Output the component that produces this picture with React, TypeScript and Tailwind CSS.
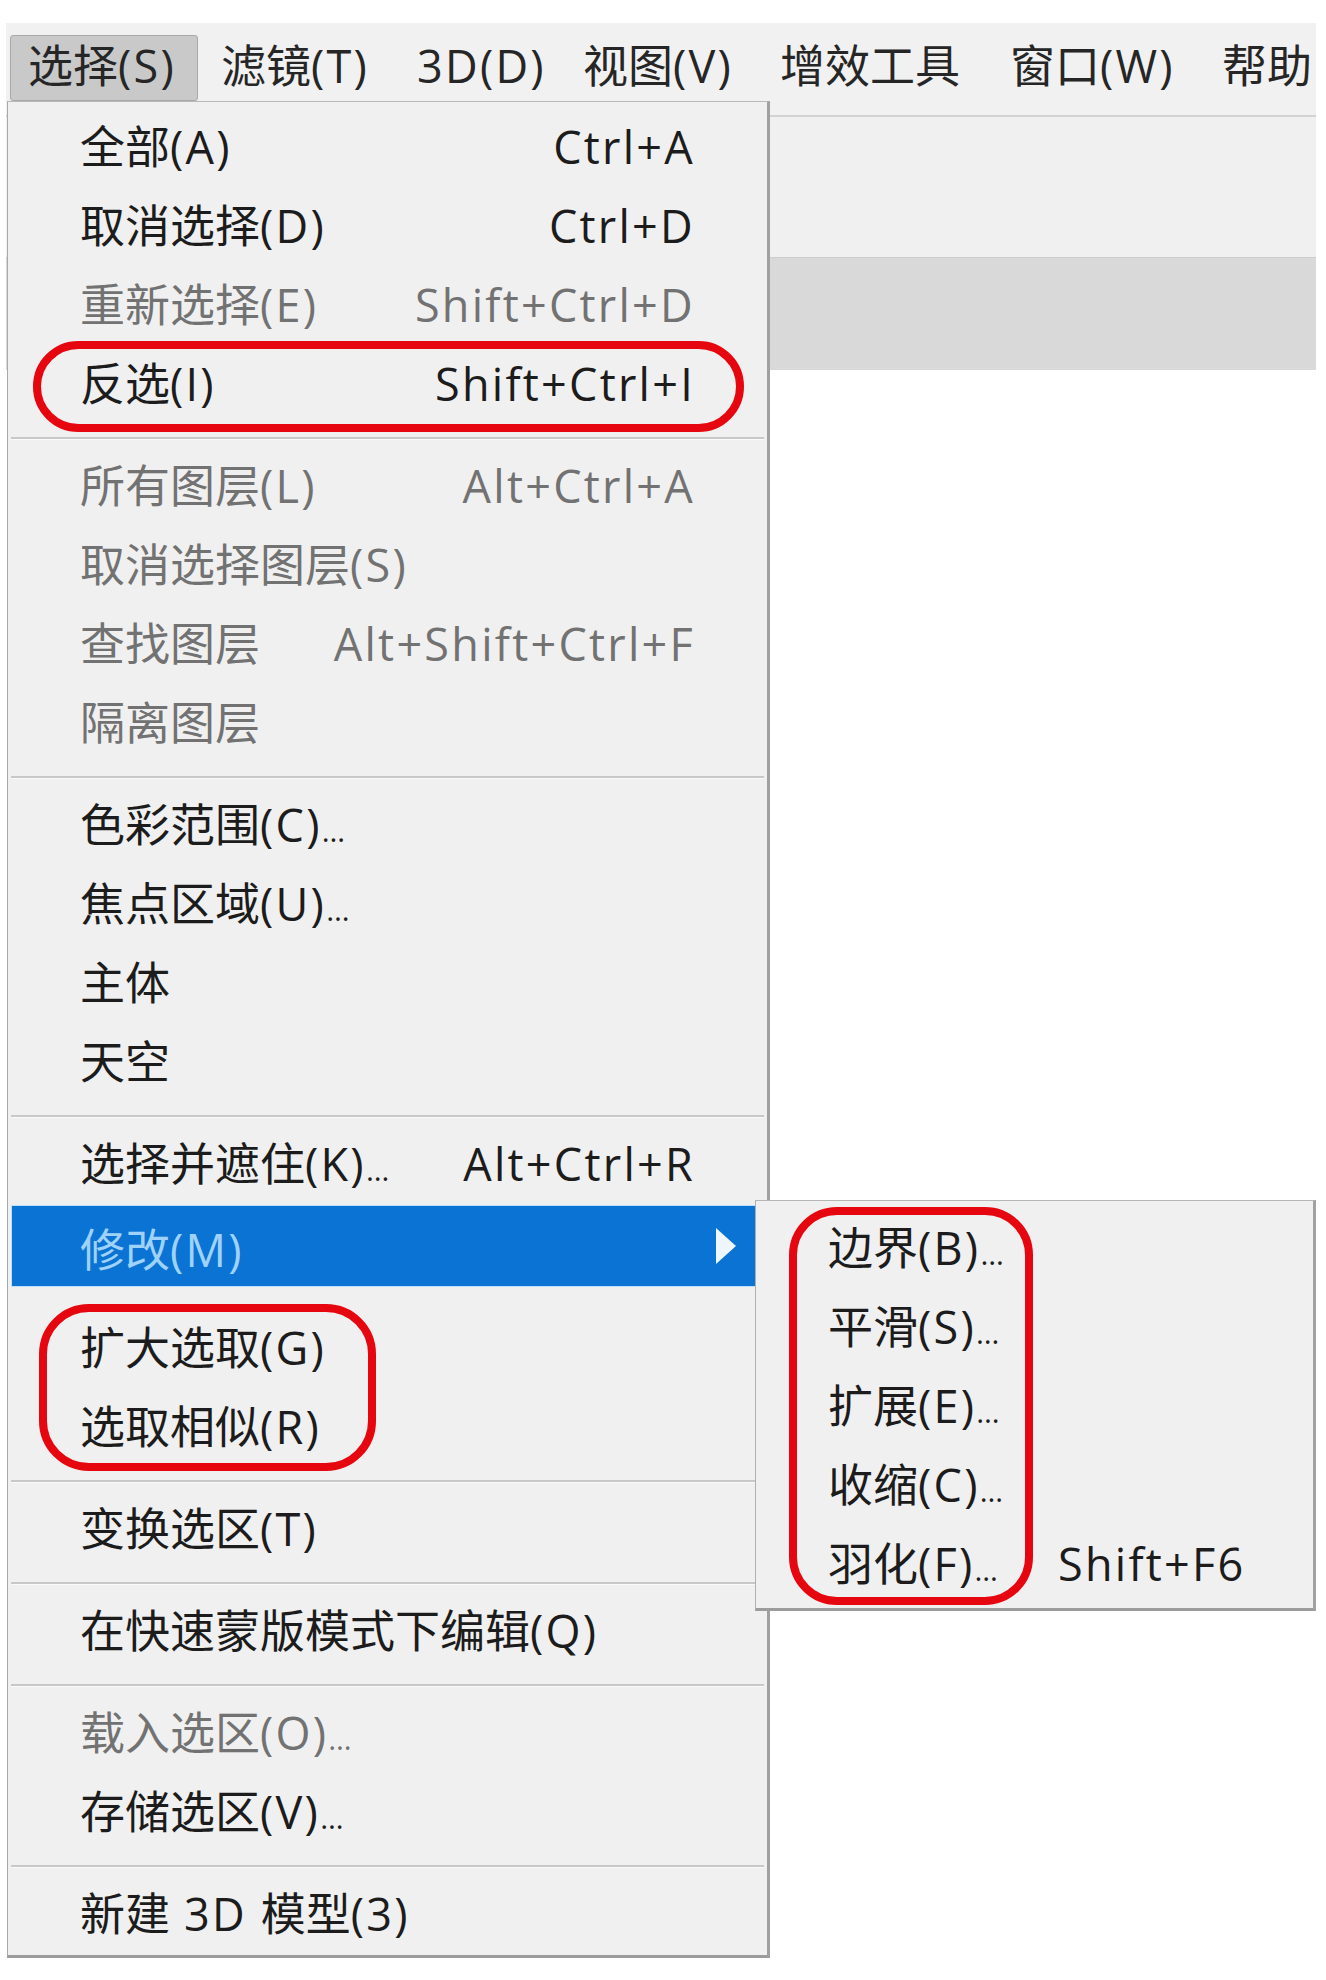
import React from "react";

const CJK = /([\u2E80-\u9FFF\u3000-\u303F\uFF00-\uFFEF]+)/;

function Txt({ s }: { s: string }) {
  const parts = s.split(CJK).filter((p) => p.length > 0);
  return (
    <>
      {parts.map((p, i) => {
        if (CJK.test(p)) return <span key={i}>{p}</span>;
        if (p.includes("…")) {
          const [a, b] = p.split("…");
          return (
            <span key={i} className="tracking-[0.05em]">
              {a}
              <span className="text-[30px] tracking-[-0.08em]">…</span>
              {b}
            </span>
          );
        }
        return (
          <span key={i} className="tracking-[0.05em] whitespace-pre">
            {p}
          </span>
        );
      })}
    </>
  );
}

type Entry =
  | { k: "item"; label: string; sc?: string; dis?: boolean }
  | { k: "sep" }
  | { k: "hl"; label: string }
  | { k: "gap" };

const MENU: Entry[] = [
  { k: "item", label: "全部(A)", sc: "Ctrl+A" },
  { k: "item", label: "取消选择(D)", sc: "Ctrl+D" },
  { k: "item", label: "重新选择(E)", sc: "Shift+Ctrl+D", dis: true },
  { k: "item", label: "反选(I)", sc: "Shift+Ctrl+I" },
  { k: "sep" },
  { k: "item", label: "所有图层(L)", sc: "Alt+Ctrl+A", dis: true },
  { k: "item", label: "取消选择图层(S)", dis: true },
  { k: "item", label: "查找图层", sc: "Alt+Shift+Ctrl+F", dis: true },
  { k: "item", label: "隔离图层", dis: true },
  { k: "sep" },
  { k: "item", label: "色彩范围(C)…" },
  { k: "item", label: "焦点区域(U)…" },
  { k: "item", label: "主体" },
  { k: "item", label: "天空" },
  { k: "sep" },
  { k: "item", label: "选择并遮住(K)…", sc: "Alt+Ctrl+R" },
  { k: "hl", label: "修改(M)" },
  { k: "gap" },
  { k: "item", label: "扩大选取(G)" },
  { k: "item", label: "选取相似(R)" },
  { k: "sep" },
  { k: "item", label: "变换选区(T)" },
  { k: "sep" },
  { k: "item", label: "在快速蒙版模式下编辑(Q)" },
  { k: "sep" },
  { k: "item", label: "载入选区(O)…", dis: true },
  { k: "item", label: "存储选区(V)…" },
  { k: "sep" },
  { k: "item", label: "新建 3D 模型(3)" },
];

const SUB = [
  { label: "边界(B)…" },
  { label: "平滑(S)…" },
  { label: "扩展(E)…" },
  { label: "收缩(C)…" },
  { label: "羽化(F)…", sc: "Shift+F6" },
];

function MenuEntry({ e }: { e: Entry }) {
  if (e.k === "sep")
    return (
      <div className="h-[23px] pt-[12px] px-[3px]">
        <div className="h-[2px] bg-[#c8c8c8]" />
        <div className="h-[1px] bg-[#fafafa]" />
      </div>
    );
  if (e.k === "gap") return <div className="h-[23px]" />;
  if (e.k === "hl")
    return (
      <div className="mx-[3px] h-[82px] bg-[#0b73d3] border border-[#bfe0fa] flex items-center justify-between pl-[68px] pr-[26px] text-[#9ed2fa]">
        <span className="pt-[6px]">
          <Txt s={e.label} />
        </span>
        <svg width="22" height="38" viewBox="0 0 22 38">
          <path d="M1 1 L21 19 L1 37 Z" fill="#eef7ff" />
        </svg>
      </div>
    );
  return (
    <div
      className={
        "h-[79px] flex items-center justify-between px-[72px] pb-[5px] " +
        (e.dis ? "text-[#727272]" : "text-[#1c1c1c]")
      }
    >
      <span>
        <Txt s={e.label} />
      </span>
      {e.sc ? (
        <span>
          <Txt s={e.sc} />
        </span>
      ) : null}
    </div>
  );
}

export default function App() {
  const bar = [
    { t: "滤镜(T)", w: "w-[196px] ml-[23px]" },
    { t: "3D(D)", w: "w-[166px]" },
    { t: "视图(V)", w: "w-[197px]" },
    { t: "增效工具", w: "w-[230px]" },
    { t: "窗口(W)", w: "w-[212px]" },
    { t: "帮助", w: "w-[94px]" },
  ];
  return (
    <div className="relative w-[1326px] h-[1980px] bg-white overflow-hidden font-['Open_Sans','Noto_Sans_CJK_SC',sans-serif] text-[45px] leading-none">
      {/* window chrome */}
      <div className="pt-[23px] pl-[6px] w-[1316px]">
        <div className="h-[94px] bg-[#f1f1f1] border-b-[2px] border-[#d2d2d2] flex items-start pl-[4px] text-[#262626] overflow-hidden">
          <div className="w-[188px] h-[66px] mt-[12px] bg-[#c9c9c9] border border-[#a9a9a9] rounded-[3px] pl-[17px] pb-[6px] flex items-center">
            <span>
              <Txt s="选择(S)" />
            </span>
          </div>
          {bar.map((b) => (
            <div key={b.t} className={"h-[66px] mt-[12px] pb-[6px] flex items-center shrink-0 " + b.w}>
              <span className="whitespace-nowrap">
                <Txt s={b.t} />
              </span>
            </div>
          ))}
        </div>
        <div className="h-[140px] bg-[#f0f0f0]" />
        <div className="h-[113px] bg-[#d9d9d9] border-t border-[#cdcdcd]" />
      </div>

      {/* main dropdown menu */}
      <div className="absolute left-[7px] top-[101px] w-[763px] bg-[#f0f0f0] border-l border-l-[#a9a9a9] border-t border-t-[#b9b9b9] border-r-[3px] border-r-[#a0a0a0] border-b-[3px] border-b-[#9c9c9c]">
        <div className="pt-[7px]">
          {MENU.map((e, i) => (
            <MenuEntry key={i} e={e} />
          ))}
        </div>
      </div>

      {/* submenu */}
      <div className="absolute left-[755px] top-[1200px] w-[561px] h-[411px] bg-[#f0f0f0] border-l border-l-[#b0b0b0] border-t border-t-[#b5b5b5] border-r-[3px] border-r-[#a2a2a2] border-b-[3px] border-b-[#9c9c9c] pt-[8px] text-[#1c1c1c]">
        {SUB.map((s) => (
          <div key={s.label} className="h-[79px] flex items-center pl-[72px] pb-[3px]">
            <span className="w-[230px] shrink-0 whitespace-nowrap">
              <Txt s={s.label} />
            </span>
            {s.sc ? (
              <span className="whitespace-nowrap">
                <Txt s={s.sc} />
              </span>
            ) : null}
          </div>
        ))}
      </div>

      {/* red annotation outlines */}
      <div className="absolute left-[33px] top-[341px] w-[711px] h-[91px] border-[8px] border-[#e6060f] rounded-[46px]" />
      <div className="absolute left-[39px] top-[1304px] w-[337px] h-[167px] border-[8px] border-[#e6060f] rounded-[50px]" />
      <div className="absolute left-[789px] top-[1207px] w-[244px] h-[398px] border-[8px] border-[#e6060f] rounded-[48px]" />
    </div>
  );
}
